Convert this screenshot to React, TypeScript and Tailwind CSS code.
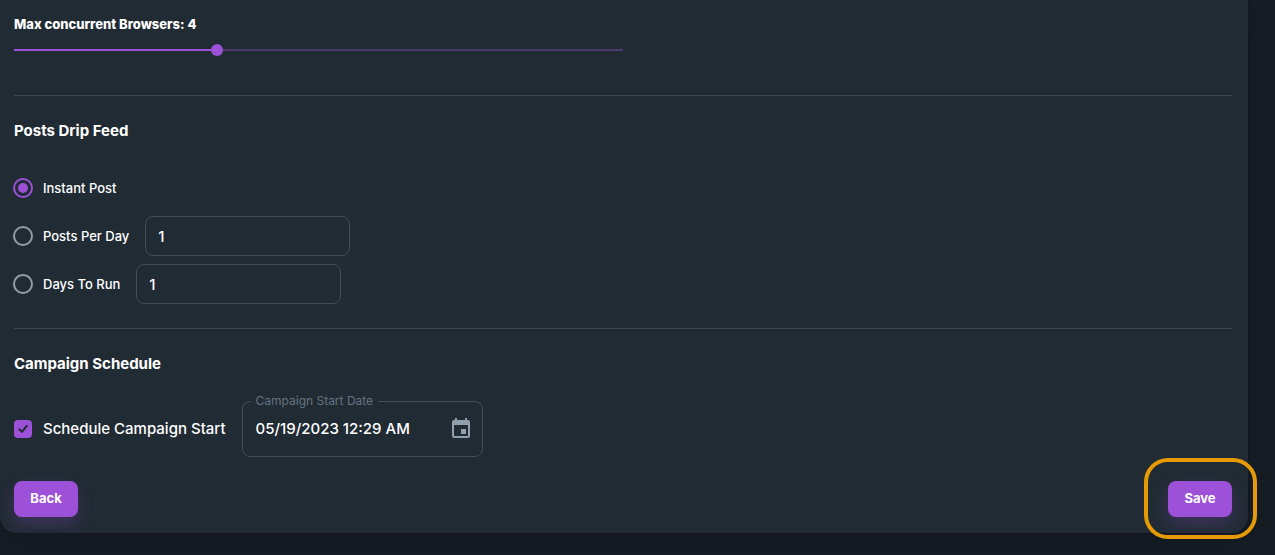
import { useState } from "react";
import type { ReactNode } from "react";
import { MdEvent } from "react-icons/md";

type Feed = "instant" | "perDay" | "days";

function ConcurrencySlider() {
  const [value, setValue] = useState(4);
  const min = 1;
  const max = 10;
  return (
    <div className="w-1/2">
      <label htmlFor="browsers" className="block text-[13px] leading-[22px] font-extrabold text-white">
        Max concurrent Browsers: {value}
      </label>
      <div className="mt-[9px] grid h-3 items-center">
        <div className="col-start-1 row-start-1 h-0.5 bg-[#4f3a70]">
          <div className="h-full bg-[#9c51d8]" style={{ width: `${((value - min) / (max - min)) * 100}%` }} />
        </div>
        <input
          id="browsers"
          type="range"
          min={min}
          max={max}
          value={value}
          onChange={(e) => setValue(Number(e.target.value))}
          className="col-start-1 row-start-1 -mx-1.5 h-3 appearance-none bg-transparent [&::-webkit-slider-thumb]:size-3 [&::-webkit-slider-thumb]:appearance-none [&::-webkit-slider-thumb]:rounded-full [&::-webkit-slider-thumb]:bg-[#9c51d8]"
        />
      </div>
    </div>
  );
}

function FeedOption({
  id,
  label,
  checked,
  onSelect,
  children,
}: {
  id: Feed;
  label: string;
  checked: boolean;
  onSelect: (id: Feed) => void;
  children?: ReactNode;
}) {
  return (
    <div className="flex h-10 items-center gap-4">
      <label className="-ml-px flex items-center gap-2.5 text-[13px] leading-[22px] font-medium text-white">
        <input
          type="radio"
          name="feed"
          checked={checked}
          onChange={() => onSelect(id)}
          className="grid size-5 appearance-none place-items-center rounded-full border-2 border-[#919eab] before:size-2.5 before:rounded-full checked:border-[#9c51d8] checked:before:bg-[#9c51d8]"
        />
        {label}
      </label>
      {children}
    </div>
  );
}

function AmountInput({ label }: { label: string }) {
  return (
    <input
      type="text"
      inputMode="numeric"
      aria-label={label}
      defaultValue="1"
      className="h-10 w-[205px] rounded-lg border border-[#414f58] bg-transparent px-3 text-[15px] font-medium text-white outline-none"
    />
  );
}

function ActionButton({ children }: { children: ReactNode }) {
  return (
    <button
      type="button"
      className="h-9 w-16 rounded-lg bg-[#9c51d8] text-[13px] font-bold text-white shadow-[0_8px_16px_0_rgba(156,81,216,0.24)]"
    >
      {children}
    </button>
  );
}

export default function App() {
  const [feed, setFeed] = useState<Feed>("instant");
  const [scheduled, setScheduled] = useState(true);

  return (
    <div className="min-h-screen bg-[#161c24] pr-[27px] font-['Inter',sans-serif]">
      <main className="rounded-b-2xl bg-[#212b34] pt-[13px] pr-4 pb-4 pl-3.5 shadow-[0_0_2px_0_rgba(0,0,0,0.2),0_12px_24px_-4px_rgba(0,0,0,0.12)]">
        <ConcurrencySlider />

        <hr className="mt-[39px] border-t border-[#3b4750]" />

        <h2 className="mt-[23px] text-[15px] leading-6 font-bold text-white">Posts Drip Feed</h2>
        <div className="mt-[25px] flex flex-col gap-2">
          <FeedOption id="instant" label="Instant Post" checked={feed === "instant"} onSelect={setFeed} />
          <FeedOption id="perDay" label="Posts Per Day" checked={feed === "perDay"} onSelect={setFeed}>
            <AmountInput label="Number of posts per day" />
          </FeedOption>
          <FeedOption id="days" label="Days To Run" checked={feed === "days"} onSelect={setFeed}>
            <AmountInput label="Number of days to run" />
          </FeedOption>
        </div>

        <hr className="mt-6 border-t border-[#3b4750]" />

        <h2 className="mt-[23px] text-[15px] leading-6 font-bold text-white">Campaign Schedule</h2>
        <div className="mt-[19px] flex items-end gap-4">
          <label className="flex h-14 items-center gap-[11px] text-[15px] leading-6 font-medium text-white">
            <span className="grid place-items-center">
              <input
                type="checkbox"
                checked={scheduled}
                onChange={(e) => setScheduled(e.target.checked)}
                className="peer col-start-1 row-start-1 size-[18px] appearance-none rounded border-2 border-[#919eab] checked:border-[#9c51d8] checked:bg-[#9c51d8]"
              />
              <svg
                viewBox="0 0 18 18"
                className="pointer-events-none invisible col-start-1 row-start-1 size-[18px] peer-checked:visible"
                fill="none"
                stroke="#212b34"
                strokeWidth="2"
                strokeLinecap="round"
                strokeLinejoin="round"
              >
                <path d="M5.4 9.4 L8 11.8 L12.7 5.9" />
              </svg>
            </span>
            Schedule Campaign Start
          </label>
          <fieldset className="h-[62px] w-[241px] min-w-0 rounded-lg border border-[#414f58]">
            <legend className="ml-2 px-[5px] text-xs leading-3 text-[#637381]">
              <label htmlFor="start-date">Campaign Start Date</label>
            </legend>
            <div className="flex h-11 items-center justify-between pr-[9px] pl-[13px]">
              <input
                id="start-date"
                type="text"
                defaultValue="05/19/2023 12:29 AM"
                className="min-w-0 flex-1 bg-transparent text-[15px] font-medium text-white outline-none"
              />
              <button type="button" aria-label="Choose date" className="text-[#919eab]">
                <MdEvent className="size-6" />
              </button>
            </div>
          </fieldset>
        </div>

        <div className="mt-6 flex justify-between">
          <ActionButton>Back</ActionButton>
          <div className="relative">
            <ActionButton>Save</ActionButton>
            <div className="pointer-events-none absolute -top-[23px] -right-[25px] -bottom-[22px] -left-6 rounded-3xl border-4 border-[#e69a06]" />
          </div>
        </div>
      </main>
    </div>
  );
}
